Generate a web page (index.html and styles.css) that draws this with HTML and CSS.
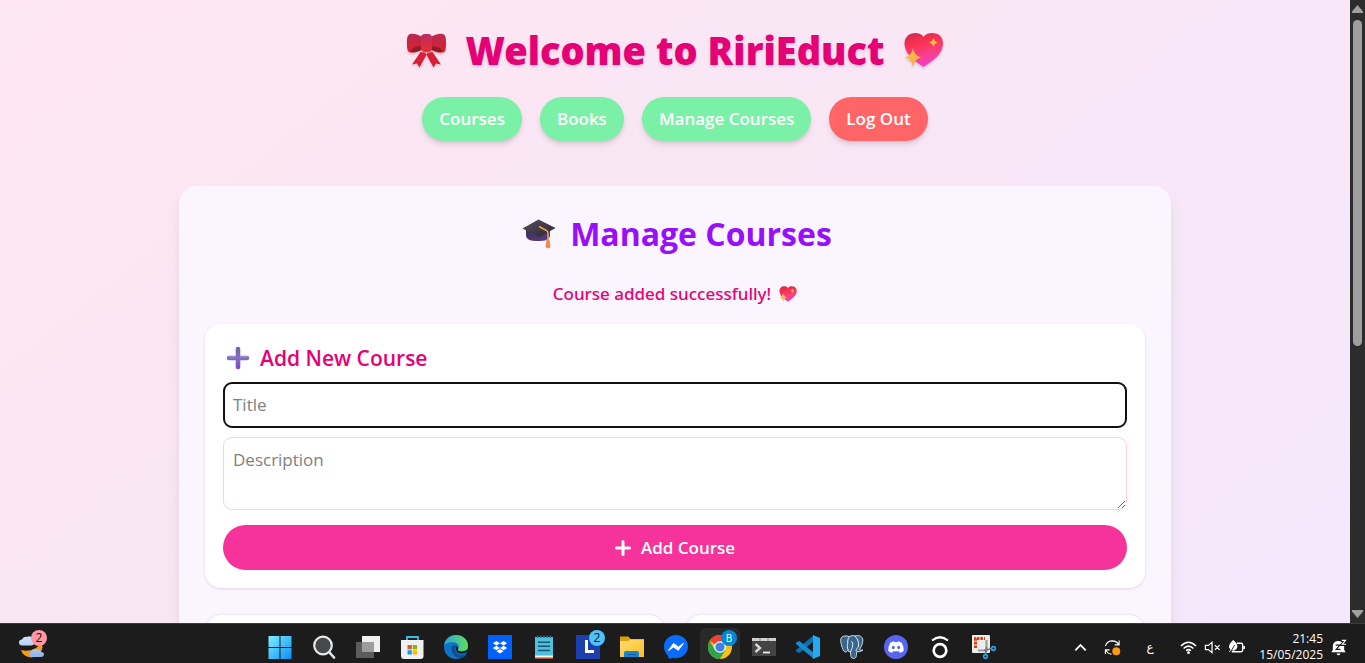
FILE: index.html
```html
<!DOCTYPE html>
<html lang="en">
<head>
<meta charset="utf-8">
<meta name="viewport" content="width=device-width, initial-scale=1">
<title>RiriEduct</title>
<link rel="stylesheet" href="styles.css">
</head>
<body>
<svg class="defs" aria-hidden="true">
  <defs>
    <linearGradient id="heartFill" x1="0" y1="0" x2="0.3" y2="1"><stop offset="0" stop-color="#c72a50"/><stop offset=".35" stop-color="#f8314f"/><stop offset=".7" stop-color="#f93f83"/><stop offset="1" stop-color="#f03fc0"/></linearGradient>
    <linearGradient id="starFill" x1="0" y1="0" x2="1" y2="1"><stop offset="0" stop-color="#ffcf4a"/><stop offset="1" stop-color="#f79a3c"/></linearGradient>
    <linearGradient id="bowTop" x1="0" y1="0" x2="0" y2="1"><stop offset="0" stop-color="#b92b50"/><stop offset="1" stop-color="#d9202f"/></linearGradient>
    <linearGradient id="bowKnot" x1="0" y1="0" x2="0" y2="1"><stop offset="0" stop-color="#b52f68"/><stop offset="1" stop-color="#ef2c2f"/></linearGradient>
    <linearGradient id="capTop" x1="0" y1="0" x2="1" y2="1"><stop offset="0" stop-color="#57505f"/><stop offset="1" stop-color="#2b2634"/></linearGradient>
    <linearGradient id="capBase" x1="0" y1="0" x2="1" y2="1"><stop offset="0" stop-color="#3b3050"/><stop offset="1" stop-color="#5d3a86"/></linearGradient>
    <linearGradient id="plusFill" x1="0" y1="0" x2="0" y2="1"><stop offset="0" stop-color="#6f61a3"/><stop offset=".5" stop-color="#8370bf"/><stop offset="1" stop-color="#7a43d4"/></linearGradient>
    <linearGradient id="winFill" x1="0" y1="0" x2="1" y2="1"><stop offset="0" stop-color="#7ff0ff"/><stop offset="1" stop-color="#0a8df5"/></linearGradient>
    <linearGradient id="cloudFill" x1="0" y1="0" x2="0" y2="1"><stop offset="0" stop-color="#d5e6fb"/><stop offset="1" stop-color="#8fb2ea"/></linearGradient>
    <linearGradient id="edgeTop" x1="0" y1="0" x2="1" y2="0"><stop offset="0" stop-color="#2aa6dc"/><stop offset="1" stop-color="#5fdc5a"/></linearGradient>
    <linearGradient id="folderFill" x1="0" y1="0" x2="1" y2="1"><stop offset="0" stop-color="#ffdd6b"/><stop offset="1" stop-color="#fbbd2c"/></linearGradient>
  </defs>
  <symbol id="heart" viewBox="0 0 40 38">
    <path d="M20 36C11 30 1 23 1 12.500 1 6 6 2 11.500 2 15.500 2 18.500 3.500 20 6 21.500 3.500 24.500 2 29 2c6 0 10.500 4 10.500 10.500C39.500 23 29 30 20 36z" fill="url(#heartFill)"/>
    <path d="M9.500 17q1 7.500 8.200 9.500-7.200 1.700-8.200 9.500-1-7.800-8.200-9.500 7.200-2 8.200-9.500zM30 6.500q.6 4 4.500 5-3.900 1-4.500 5-.6-4-4.500-5 3.900-1 4.500-5z" fill="url(#starFill)"/>
  </symbol>
</svg>

<div class="viewport">
  <div class="page">
    <header class="site-header">
      <h1 class="site-title">
        <svg class="emoji-lg" viewBox="0 0 40 38" role="img" aria-label="Ribbon">
          <path d="M14 21 5.500 33.500l5-1 2.500 4L21 22zM26 21l8.500 12.500-5-1-2.500 4L19 22z" fill="#d91f36"/>
          <path d="M16 6C12 3.500 7 2 3.500 3 .8 4 .3 7 .5 13c.1 5 .5 8.500 3.500 8.500 4 .5 8-.5 12-3zM24 6c4-2.500 9-4 12.500-3C39.200 4 39.700 7 39.500 13c-.1 5-.5 8.500-3.500 8.500-4 .5-8-.5-12-3z" fill="url(#bowTop)"/>
          <path d="M16 15c-4 0-9 .5-12.500 5.500 4 1 8.500 0 12.500-2.500zM24 15c4 0 9 .5 12.500 5.500-4 1-8.500 0-12.500-2.500z" fill="#8e1d26"/>
          <rect x="14.500" y="3" width="11" height="18" rx="4" fill="url(#bowKnot)"/>
        </svg>
        <span>Welcome to RiriEduct</span>
        <svg class="emoji-lg" role="img" aria-label="Sparkling heart"><use href="#heart"/></svg>
      </h1>
      <nav class="site-nav">
        <a class="pill" href="#courses">Courses</a>
        <a class="pill" href="#books">Books</a>
        <a class="pill" href="#manage">Manage Courses</a>
        <button class="pill pill-danger" type="button">Log Out</button>
      </nav>
    </header>

    <main class="panel" id="manage">
      <h2 class="panel-title">
        <svg class="emoji-md" viewBox="0 0 34 30" role="img" aria-label="Graduation cap">
          <path d="M4 10v6c0 5 5 6 12 6s12-1 12-6v-6z" fill="url(#capBase)"/>
          <path d="M16.500.5 33.500 9 17.500 18 .5 9.500z" fill="url(#capTop)"/>
          <path d="M17 7.500l7.500 4q1.500.8 1.500 3V22" fill="none" stroke="#e5a544" stroke-width="1.600"/>
          <path d="M24.500 20.500h3L28.500 28q-2.500 2.500-5 0z" fill="#f2894e"/>
        </svg>
        <span>Manage Courses</span>
      </h2>
      <p class="notice" role="status">Course added successfully!
        <svg class="emoji-sm" role="img" aria-label="Sparkling heart"><use href="#heart"/></svg>
      </p>

      <form class="card course-form">
        <h3 class="card-title">
          <svg class="emoji-plus" viewBox="0 0 24 24" role="img" aria-label="Plus"><path d="M9.700 3a2.300 2.300 0 0 1 4.600 0v6.700H21a2.300 2.300 0 0 1 0 4.600h-6.700V21a2.300 2.300 0 0 1-4.600 0v-6.700H3a2.300 2.300 0 0 1 0-4.600h6.700z" fill="url(#plusFill)"/><path d="M3 10.800h6.500M14.500 10.800H21" stroke="#a99bd3" stroke-linecap="round"/></svg>
          <span>Add New Course</span>
        </h3>
        <input class="field field-focused" type="text" placeholder="Title" aria-label="Title">
        <textarea class="field field-area" placeholder="Description" aria-label="Description"></textarea>
        <button class="submit" type="button">
          <svg class="icon-plus" viewBox="0 0 16 16" aria-hidden="true"><path d="M8 1.500v13M1.500 8h13" stroke="#fff" stroke-width="3" stroke-linecap="round"/></svg>
          Add Course
        </button>
      </form>

      <section class="course-grid">
        <article class="card course-card"></article>
        <article class="card course-card"></article>
      </section>
    </main>
  </div>

  <div class="scrollbar" aria-hidden="true">
    <svg class="arrow" viewBox="0 0 11 8"><path d="M5.500 0 11 6.500V8H0V6.500z" fill="#9f9f9f"/></svg>
    <div class="track"><div class="thumb"></div></div>
    <svg class="arrow" viewBox="0 0 11 8"><path d="M5.500 8 11 1.500V0H0v1.500z" fill="#9f9f9f"/></svg>
  </div>
</div>

<footer class="taskbar">
  <button class="weather" type="button" aria-label="Weather">
    <svg viewBox="0 0 28 28"><path d="M19 6q4 7-2 11-6 4-15 2 2 7 10 7.500 10-.5 11.500-10Q23 10 19 6z" fill="#f29a1f"/><path d="M3 14.500a3 3 0 0 1 0-6q1.500-3.500 5-2.500 3-2 5.500 1.500 3 1 2 4.500-1 2.500-3 2.500zM12 26a3 3 0 0 1 .5-5.500q1.500-3.500 5-2 3.500-.8 4.500 2.500 3 0 3 2.800Q24.500 26 22 26z" fill="url(#cloudFill)"/></svg>
    <span class="badge badge-pink">2</span>
  </button>
  <nav class="apps">
    <button class="app" type="button" aria-label="Start"><svg viewBox="0 0 24 24"><path d="M.5 1h11v11H.500zM12.500 1h11v11h-11zM.5 13h11v11H.500zM12.500 13h11v11h-11z" fill="url(#winFill)"/></svg></button>
    <button class="app" type="button" aria-label="Search"><svg viewBox="0 0 24 24"><circle cx="11" cy="10.500" r="8.800" fill="#45494b" stroke="#e6e9ea" stroke-width="2.200"/><path d="m17.500 17.500 4.500 5" stroke="#e6e9ea" stroke-width="2.600" stroke-linecap="round"/></svg></button>
    <button class="app" type="button" aria-label="Task view"><svg viewBox="0 0 24 24"><path d="M6 1h18v16H6z" fill="#efefef"/><path d="M0 7h18v16H0z" fill="#5c5c5c"/><path d="M6 7h12v10H6z" fill="#9c9c9c"/></svg></button>
    <button class="app" type="button" aria-label="Store"><svg viewBox="0 0 24 24"><path d="M7 6V2h11v4" fill="none" stroke="#35c0e4" stroke-width="1.800"/><path d="M1 5h22.500v16q0 3-3 3H4q-3 0-3-3z" fill="#efefef"/><path d="M7.500 10h4.300v4.300H7.500z" fill="#f25022"/><path d="M12.700 10H17v4.300h-4.300z" fill="#7fba00"/><path d="M7.500 15.200h4.300v4.300H7.500z" fill="#00a4ef"/><path d="M12.700 15.200H17v4.300h-4.300z" fill="#ffb900"/></svg></button>
    <button class="app" type="button" aria-label="Edge"><svg viewBox="0 0 24 24"><circle cx="12" cy="12" r="12" fill="#1173c7"/><path d="M.2 10C1 4 6 0 12 0c7 0 12 5 12 10.500 0 4-3 6-6.500 6-3 0-4-1-3.500-2.500 1.500-2 1-5.500-3-6.500C6 6.500 2 8 .2 10z" fill="url(#edgeTop)"/><path d="M8 11c-2 6 2 12 8.500 12 3 0 5-2 6.500-4-5 2-10 1-11.500-3-.8-2 0-4 1-5-1.500-1-3.500-1-4.500 0z" fill="#0c4f96"/><path d="M12.500 11c-1.500 4 0 7 4 7.500 3 .3 5-.5 7-2.500l-1 3q4-5-1-3.500c-3 1.500-8 1.500-7.500-1.500.5-1 .3-2-1.500-3z" fill="#1c1c1c"/></svg></button>
    <button class="app" type="button" aria-label="Dropbox"><svg viewBox="0 0 24 24"><path d="M0 0h24v24H0z" fill="#0061fe"/><path d="m8.400 6 3.600 2.300-3.600 2.300-3.600-2.300zM15.600 6l3.600 2.300-3.600 2.300L12 8.300zM8.400 10.700 12 13l-3.600 2.300L4.800 13zM15.600 10.700l3.600 2.300-3.600 2.300L12 13zM12 14l3.600 2.300-3.600 2.300-3.600-2.300z" fill="#fff"/></svg></button>
    <button class="app" type="button" aria-label="Notepad"><svg viewBox="0 0 24 24"><path d="M3 2h18v20H3z" fill="#4fc1df"/><path d="M3 20.500h18V23H3z" fill="#f2f2f2"/><path d="M3 22.500h18V24H3z" fill="#a95420"/><path d="M6 7.200h12M6 11.300h12M6 15.400h12" stroke="#14566e" stroke-width="1.500"/><path d="M5.500.5v2.500M8.700.5v2.500M12 .5v2.500M15.300.5v2.500M18.500.5v2.500" stroke="#16738f" stroke-width="1.500"/></svg></button>
    <button class="app" type="button" aria-label="L app"><svg viewBox="0 0 24 24"><path d="M0 0h24v24H0z" fill="#1d3fae"/><path d="M10.500 5v11.500H18" fill="none" stroke="#fff" stroke-width="3"/></svg><span class="badge badge-blue">2</span></button>
    <button class="app" type="button" aria-label="File Explorer"><svg viewBox="0 0 24 24"><path d="M0 1.500h8.500l2 2.500H24v5H0z" fill="#dd9f10"/><path d="M0 6h8l2-1.500h14V22H0z" fill="url(#folderFill)"/><path d="M4 22v-4q0-2 2-2h11q2 0 2 2v4z" fill="#1687cf"/><path d="M8 19.500h8" stroke="#085a95"/></svg></button>
    <button class="app" type="button" aria-label="Messenger"><svg viewBox="0 0 24 24"><path d="M12 0c6.700 0 12 5 12 11.600S18.700 23.200 12 23.200q-2 0-3.500-.5L5 24l-1.200-3.500Q0 17 0 11.600C0 5 5.300 0 12 0z" fill="#0a6cff"/><path d="m4.500 15.500 5-7 5 3.500 5-3.700-5.200 7-4.800-3.300z" fill="#fff" stroke="#fff" stroke-linejoin="round"/></svg></button>
    <button class="app app-active" type="button" aria-label="Chrome"><svg viewBox="0 0 24 24"><circle cx="12" cy="12" r="12" fill="#fbc116"/><path d="M12 12 1.600 6A12 12 0 0 1 22.400 6z" fill="#ea4335"/><path d="M1.600 6A12 12 0 0 0 12 24l5.200-9H7z" fill="#2fa24f"/><path d="M12 6h10.400L17 15z" fill="#fbc116"/><circle cx="12" cy="12" r="5.800" fill="#fff"/><circle cx="12" cy="12" r="4.600" fill="#3b82f0"/></svg><span class="badge badge-profile">B</span></button>
    <button class="app" type="button" aria-label="Terminal"><svg viewBox="0 0 24 24"><path d="M0 3h24v18H0z" fill="#444"/><path d="M0 3h24v3H0z" fill="#d0d0d0"/><path d="M8 3v3M16 3v3" stroke="#888"/><path d="m3.500 9 4.500 4-4.500 4" fill="none" stroke="#d6d6d6" stroke-width="2.400"/><path d="M11 17.500h7" stroke="#eee" stroke-width="1.800"/></svg></button>
    <button class="app" type="button" aria-label="VS Code"><svg viewBox="0 0 24 24"><path d="M18 0v6L3.500 18 0 16.500V15z" fill="#0a70b8"/><path d="M18 24v-6L3.500 6 0 7.500V9z" fill="#168bd2"/><path d="m17 0 7 3v18l-7 3z" fill="#28a8f2"/></svg></button>
    <button class="app" type="button" aria-label="PostgreSQL"><svg viewBox="0 0 24 24"><path d="M5 1C1 1 .2 4 1 8c.8 4 2 8 4 9 1.500.5 2-1 3-2l.5 1.500 2 .5c0 3 .2 6.500 3 6.500 3 0 3-3 3.200-7 2 .5 4.500 0 6.300-1.500-1 0-2.500.3-3.500-.5C22 11 24 5 22 2.500 20 0 17 .3 15 1c-2-.6-4-.5-5.500.5C8 1 6.500.8 5 1z" fill="#37678f" stroke="#d5dce2"/><path d="M9.500 1.500C7 4 8 8 7.500 10.500c-.3 2 0 3.500 1 4.500M15 1c3 3 4 7 3.500 10 0 2-2.500 2-2.500 5M11 7c2-1 2 2 1.500 4 0 2-1 3-2 6" fill="none" stroke="#e8edf1"/></svg></button>
    <button class="app" type="button" aria-label="Discord"><svg viewBox="0 0 24 24"><circle cx="12" cy="12" r="12" fill="#5865f2"/><path d="M6.500 7.500 10 6.300l.7 1h2.600l.7-1 3.500 1.200q2.500 4 2.200 8.500-2 1.500-3.700 1.800l-1-1.600H9l-1 1.600Q6.300 17.500 4.300 16q-.3-4.500 2.200-8.500z" fill="#fff"/><ellipse cx="9.300" cy="12.500" rx="1.500" ry="1.700" fill="#5865f2"/><ellipse cx="14.700" cy="12.500" rx="1.500" ry="1.700" fill="#5865f2"/></svg></button>
    <button class="app" type="button" aria-label="Audio"><svg viewBox="0 0 24 24"><circle cx="12" cy="15.500" r="6.300" fill="none" stroke="#fff" stroke-width="2.700"/><path d="M4 5.500q8-6.500 16 0" fill="none" stroke="#fff" stroke-width="2.200"/></svg></button>
    <button class="app" type="button" aria-label="Snipping Tool"><svg viewBox="0 0 24 24"><rect width="18" height="18" rx="1" fill="#ececec"/><path d="M3.500 13V3.500H13" fill="none" stroke="#dc3c16" stroke-width="3" stroke-dasharray="2.600 1"/><path d="M14.500 5v10.500H6" fill="none" stroke="#9a9a9a" stroke-width="2"/><path d="m12 15.500 8-2M14.500 12l-1 8" stroke="#777" stroke-width="1.800"/><circle cx="21.500" cy="13.500" r="1.900" fill="none" stroke="#22a7ea" stroke-width="1.600"/><circle cx="13.500" cy="21.500" r="1.900" fill="none" stroke="#22a7ea" stroke-width="1.600"/></svg></button>
  </nav>
  <div class="tray">
    <button class="tray-btn tray-wide" type="button" aria-label="Show hidden icons"><svg viewBox="0 0 18 18"><path d="m3.500 12 5.500-5.500 5.500 5.500" fill="none" stroke="#fff" stroke-width="1.900"/></svg></button>
    <button class="tray-btn tray-wide" type="button" aria-label="Sync"><svg viewBox="0 0 18 18"><path d="M1.500 7.500Q3 2 9 2q4.500.2 6.500 4M16 1.500v4.700h-4.700M8 16q-4 0-6-4.500M1.500 16v-4.500H6" fill="none" stroke="#fff" stroke-width="1.200"/><circle cx="13" cy="13" r="4.200" fill="#ff9a0c"/></svg></button>
    <span class="lang" lang="ar">ع</span>
    <button class="tray-btn" type="button" aria-label="Wi-Fi"><svg viewBox="0 0 18 18"><path d="M1 7.500Q9-.5 17 7.500M3.800 10q5.200-5 10.400 0M6.500 12.500q2.500-2.500 5 0" fill="none" stroke="#fff" stroke-width="1.600"/><circle cx="9" cy="14.500" r="1.500" fill="#fff"/></svg></button>
    <button class="tray-btn" type="button" aria-label="Muted"><svg viewBox="0 0 18 18"><path d="M1.500 6.800h3L8.500 3.500v11l-4-3.300h-3zM11.500 6.500l5 5M16.500 6.500l-5 5" fill="none" stroke="#fff" stroke-width="1.300"/></svg></button>
    <button class="tray-btn" type="button" aria-label="Battery saver"><svg viewBox="0 0 18 18"><path d="M9.500 4.500H14q1.500 0 1.500 1.500v6q0 1.500-1.500 1.500H4M17.200 7.500v3" fill="none" stroke="#fff" stroke-width="1.500"/><path d="M5.500 1.500q4 3 4 6.500 0 3-3.500 4-4-.3-4.500-3.500Q1.500 5 5.500 1.500zM1.500 13.500l3-4" fill="#fff" stroke="#fff"/><path d="m4 11.500 3-5" stroke="#1c1c1c"/></svg></button>
    <div class="clock"><time>21:45</time><time>15/05/2025</time></div>
    <button class="tray-btn tray-bell" type="button" aria-label="Notifications"><svg viewBox="0 0 18 18"><path d="M3 11.500V7q.5-5 6-5 5.500.5 6 5v4.500l1.500 2.500h-15z" fill="#fff"/><path d="M7 15.300h4q-.5 2-2 2t-2-2z" fill="#fff"/><path d="M6 6.500h4.500l-4 4.500H11" fill="none" stroke="#1c1c1c" stroke-width="1.200"/><path d="M12 1.500h4.500L12.500 6H17" fill="none" stroke="#1c1c1c" stroke-width="3"/><path d="M12.500 1.500h4L13 5.500h4" fill="none" stroke="#fff" stroke-width="1.200"/></svg></button>
  </div>
</footer>
</body>
</html>
```
FILE: styles.css
```css
* {
  box-sizing: border-box;
}

body {
  margin: 0;
  height: 100vh;
  display: grid;
  grid-template-rows: minmax(0, 1fr) auto;
  overflow: hidden;
  font-family: "Segoe UI", "Open Sans", "Noto Sans", sans-serif;
}

h1,
h2,
h3,
p {
  margin: 0;
}

button {
  border: 0;
  padding: 0;
  background: none;
  color: inherit;
  font: inherit;
}

.defs {
  position: absolute;
  width: 0;
  height: 0;
}

.viewport {
  display: flex;
  overflow: hidden;
}

.page {
  flex: 1;
  height: max-content;
  padding: 26px 26px 44px;
  background: linear-gradient(to bottom right, #fee7f0, #f9e6f5 32%, #f3e8ff);
}

.site-header {
  display: flex;
  flex-direction: column;
  align-items: center;
  gap: 23px;
}

.site-title {
  display: flex;
  align-items: center;
  gap: 18px;
  color: #e60076;
  font-family: "Segoe UI", "Noto Sans", "Open Sans", sans-serif;
  font-size: 38px;
  font-weight: 900;
  line-height: 48px;
  text-shadow: 0 2px 3px rgba(90, 0, 60, 0.15);
}

.emoji-lg {
  width: 41px;
  height: 38px;
  filter: drop-shadow(0 2px 1px rgba(90, 0, 60, 0.15));
}

.site-nav {
  display: flex;
  gap: 18px;
}

.pill {
  padding: 10px 17px;
  border-radius: 24px;
  background: #7bf1a8;
  box-shadow: 0 4px 6px -1px rgba(0, 0, 0, 0.12), 0 2px 4px -2px rgba(0, 0, 0, 0.12);
  color: #fff;
  font-size: 17px;
  font-weight: 600;
  line-height: 24px;
  text-decoration: none;
}

.pill-danger {
  background: #ff6467;
}

.panel {
  max-width: 992px;
  margin: 45px auto 0;
  padding: 26px;
  border-radius: 18px;
  background: #faf5ff;
  box-shadow: 0 10px 16px -3px rgba(0, 0, 0, 0.1), 0 4px 7px -4px rgba(0, 0, 0, 0.1);
}

.panel-title {
  display: flex;
  justify-content: center;
  align-items: center;
  gap: 14px;
  margin-bottom: 26px;
  padding-left: 4px;
  color: #9810fa;
  font-size: 32px;
  font-weight: 700;
  line-height: 44px;
}

.emoji-md {
  width: 34px;
  height: 30px;
}

.notice {
  display: flex;
  justify-content: center;
  align-items: center;
  gap: 8px;
  margin-bottom: 18px;
  color: #e60076;
  font-family: "Segoe UI", "Noto Sans", "Open Sans", sans-serif;
  font-size: 17px;
  font-weight: 500;
  line-height: 24px;
}

.emoji-sm {
  width: 18px;
  height: 18px;
}

.card {
  border-radius: 16px;
  background: #fff;
  box-shadow: 0 1px 3px rgba(0, 0, 0, 0.12);
}

.course-form {
  display: flex;
  flex-direction: column;
  padding: 18px;
}

.card-title {
  display: flex;
  align-items: center;
  gap: 10px;
  margin-bottom: 8px;
  padding-left: 3px;
  color: #e60076;
  font-size: 21px;
  font-weight: 600;
  line-height: 32px;
}

.emoji-plus {
  width: 24px;
  height: 24px;
}

.field {
  width: 100%;
  margin: 0 0 9px;
  padding: 10px 9px;
  border: 1px solid #fccee8;
  border-radius: 9px;
  outline: 0;
  background: #fff;
  color: #222;
  font: inherit;
  font-size: 17px;
  line-height: 24px;
}

.field::placeholder {
  color: #808080;
}

.field-focused {
  padding: 9px 8px;
  border: 2px solid #101010;
}

.field-area {
  height: 73px;
  margin-bottom: 15px;
  resize: vertical;
}

.submit {
  display: flex;
  justify-content: center;
  align-items: center;
  gap: 10px;
  height: 45px;
  border-radius: 24px;
  background: #f6339a;
  color: #fff;
  font-size: 17px;
  font-weight: 600;
}

.icon-plus {
  width: 16px;
  height: 16px;
}

.course-grid {
  display: grid;
  grid-template-columns: 1fr 1fr;
  gap: 20px;
  margin-top: 26px;
}

.course-card {
  min-height: 420px;
  border: 1px solid #f3e8ff;
}

.scrollbar {
  flex: none;
  display: flex;
  flex-direction: column;
  align-items: center;
  justify-content: space-between;
  width: 15px;
  padding: 5px 0;
  background: #2c2c2c;
}

.arrow {
  width: 11px;
  height: 8px;
}

.track {
  flex: 1;
  display: flex;
  margin: 7px 0;
}

.thumb {
  width: 9px;
  height: 56%;
  border-radius: 5px;
  background: #9f9f9f;
}

.taskbar {
  position: relative;
  display: flex;
  align-items: stretch;
  height: 40px;
  border-top: 1px solid #3b3b3b;
  background: #1c1c1c;
  color: #fff;
}

.weather {
  position: relative;
  width: 66px;
  margin-right: 192px;
}

.weather svg {
  display: block;
  width: 28px;
  height: 28px;
  margin: 3px auto 0;
}

.apps {
  display: flex;
  flex: 1;
}

.app {
  position: relative;
  display: grid;
  place-items: center;
  width: 44px;
  padding-top: 7px;
  border: 2px solid transparent;
  border-width: 0 2px;
}

.app svg {
  width: 24px;
  height: 24px;
}

.app-active {
  margin-top: 4px;
  padding-top: 3px;
  background: #292929 padding-box;
  border-radius: 6px 6px 0 0;
}

.badge {
  position: absolute;
  display: grid;
  place-items: center;
  width: 16px;
  height: 16px;
  border-radius: 50%;
  color: #111;
  font-size: 12px;
  line-height: 16px;
}

.badge-pink {
  top: 6px;
  right: 19px;
  background: #ff99a4;
}

.badge-blue,
.badge-profile {
  top: 6px;
  right: 3px;
  background: #4cc2ff;
}

.badge-profile {
  top: 2px;
  background: #0486d4;
  color: #fff;
  font-size: 10px;
}

.tray {
  display: flex;
  align-items: center;
  padding: 7px 12px 0 0;
}

.tray-btn {
  display: grid;
  place-items: center;
  width: 24px;
}

.tray-btn svg {
  width: 17px;
  height: 17px;
}

.tray-wide {
  width: 32px;
}

.tray-bell {
  width: 30px;
}

.lang {
  width: 48px;
  padding-right: 4px;
  font-family: "DejaVu Sans", sans-serif;
  font-size: 12px;
  text-align: center;
}

.clock {
  display: flex;
  flex-direction: column;
  width: 75px;
  font-size: 12px;
  line-height: 16px;
  text-align: right;
}
```
